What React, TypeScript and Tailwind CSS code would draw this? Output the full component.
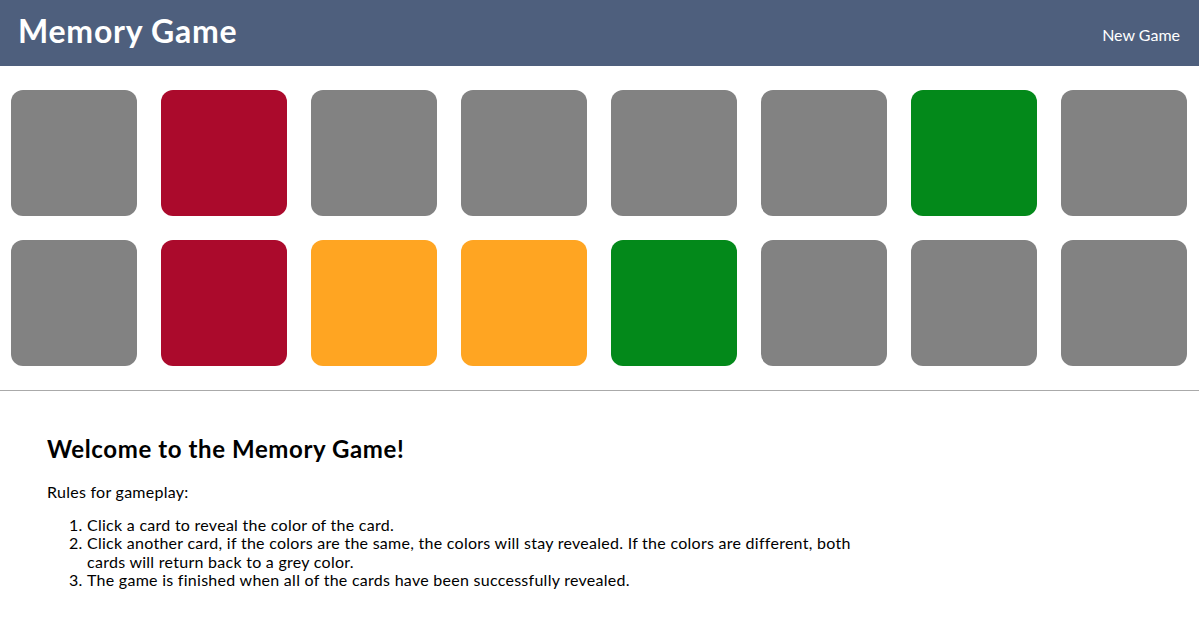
const cards = [
  "gray", "red", "gray", "gray", "gray", "gray", "green", "gray",
  "gray", "red", "orange", "orange", "green", "gray", "gray", "gray",
];

const colorClass: Record<string, string> = {
  gray: "bg-[#828282]",
  red: "bg-[#ab0a2c]",
  green: "bg-[#03891a]",
  orange: "bg-[#ffa522]",
};

export default function App() {
  return (
    <div className="min-h-screen bg-white text-black font-['Lato','Open_Sans',sans-serif]">
      {/* Header */}
      <header className="h-[66px] bg-[#4e5f7d] flex items-center justify-between pl-[18px] pr-[19px]">
        <h1 className="text-[32px] font-bold text-white leading-none -mt-[5px] tracking-[0.75px]">Memory Game</h1>
        <button className="text-[16px] text-white leading-none mt-[4px]">New Game</button>
      </header>

      {/* Board */}
      <div className="grid grid-cols-[repeat(8,126px)] gap-6 py-6 pl-[11px]">
        {cards.map((c, i) => (
          <div key={i} className={`h-[126px] rounded-[12px] ${colorClass[c]}`} />
        ))}
      </div>

      <hr className="border-0 border-t border-[#aaaaaa]" />

      {/* Rules */}
      <div className="pl-[47px] pt-[43px] w-[880px]">
        <h2 className="text-[24px] font-bold leading-[30px] tracking-[0.6px]">Welcome to the Memory Game!</h2>
        <p className="text-[16px] leading-[18px] mt-[19px] tracking-[0.27px]">Rules for gameplay:</p>
        <ol className="list-decimal pl-[40px] mt-[15px] text-[16px] leading-[18.4px] tracking-[0.27px]">
          <li>Click a card to reveal the color of the card.</li>
          <li>
            Click another card, if the colors are the same, the colors will stay revealed. If the colors are different, both cards will return back to a grey color.
          </li>
          <li>The game is finished when all of the cards have been successfully revealed.</li>
        </ol>
      </div>
    </div>
  );
}
